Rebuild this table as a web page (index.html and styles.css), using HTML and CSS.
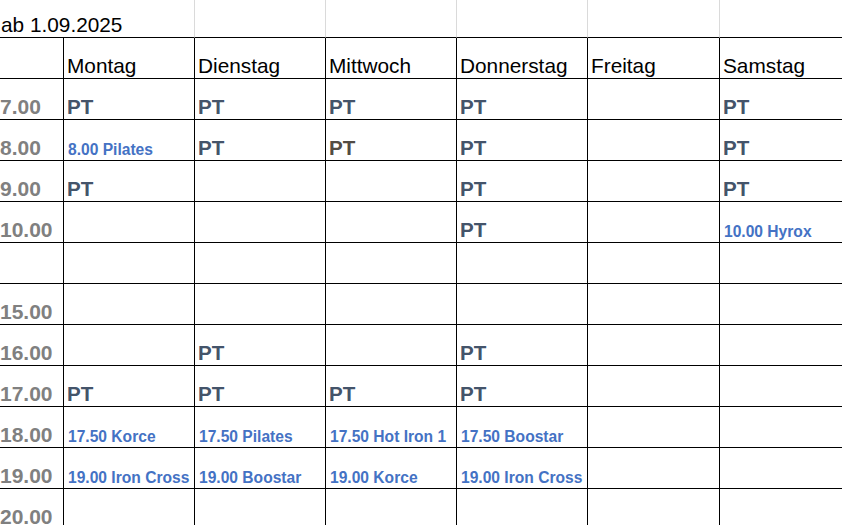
FILE: index.html
```html
<!DOCTYPE html>
<html lang="de">
<head>
<meta charset="utf-8">
<title>Kursplan ab 1.09.2025</title>
<link rel="stylesheet" href="styles.css">
</head>
<body>
<div class="sheet">
  <div class="c top title"><span>ab 1.09.2025</span></div>
  <div class="c top"></div><div class="c top"></div><div class="c top"></div><div class="c top"></div><div class="c top"></div>

  <div class="c t"></div>
  <div class="c h">Montag</div><div class="c h">Dienstag</div><div class="c h">Mittwoch</div><div class="c h">Donnerstag</div><div class="c h">Freitag</div><div class="c h">Samstag</div>

  <div class="c t">7.00</div>
  <div class="c pt">PT</div><div class="c pt">PT</div><div class="c pt">PT</div><div class="c pt">PT</div><div class="c"></div><div class="c pt">PT</div>

  <div class="c t">8.00</div>
  <div class="c k">8.00 Pilates</div><div class="c pt">PT</div><div class="c pt alt">PT</div><div class="c pt">PT</div><div class="c"></div><div class="c pt">PT</div>

  <div class="c t">9.00</div>
  <div class="c pt">PT</div><div class="c"></div><div class="c"></div><div class="c pt">PT</div><div class="c"></div><div class="c pt">PT</div>

  <div class="c t">10.00</div>
  <div class="c"></div><div class="c"></div><div class="c"></div><div class="c pt">PT</div><div class="c"></div><div class="c k">10.00 Hyrox</div>

  <div class="c t"></div>
  <div class="c"></div><div class="c"></div><div class="c"></div><div class="c"></div><div class="c"></div><div class="c"></div>

  <div class="c t">15.00</div>
  <div class="c"></div><div class="c"></div><div class="c"></div><div class="c"></div><div class="c"></div><div class="c"></div>

  <div class="c t">16.00</div>
  <div class="c"></div><div class="c pt">PT</div><div class="c"></div><div class="c pt">PT</div><div class="c"></div><div class="c"></div>

  <div class="c t">17.00</div>
  <div class="c pt">PT</div><div class="c pt">PT</div><div class="c pt">PT</div><div class="c pt">PT</div><div class="c"></div><div class="c"></div>

  <div class="c t">18.00</div>
  <div class="c k">17.50 Korce</div><div class="c k">17.50 Pilates</div><div class="c k">17.50 Hot Iron 1</div><div class="c k">17.50 Boostar</div><div class="c"></div><div class="c"></div>

  <div class="c t">19.00</div>
  <div class="c k">19.00 Iron Cross</div><div class="c k">19.00 Boostar</div><div class="c k">19.00 Korce</div><div class="c k">19.00 Iron Cross</div><div class="c"></div><div class="c"></div>

  <div class="c t">20.00</div>
  <div class="c"></div><div class="c"></div><div class="c"></div><div class="c"></div><div class="c"></div><div class="c"></div>
</div>
</body>
</html>
```

FILE: styles.css
```css
html, body {
  margin: 0;
  padding: 0;
  background: #ffffff;
  overflow: hidden;
}

.sheet {
  display: grid;
  grid-template-columns: 64px 131px 131px 131px 131px 132px 140px;
  grid-template-rows: 38px repeat(12, 41px);
  width: 860px;
  font-family: "Liberation Sans", Arial, sans-serif;
}

.c {
  display: flex;
  align-items: flex-end;
  border-right: 1px solid #000;
  border-bottom: 1px solid #000;
  padding: 0 0 0 3px;
  white-space: nowrap;
  overflow: visible;
  font-size: 20.8px;
  line-height: 24px;
  color: #000;
  min-width: 0;
}

.top {
  border-right-color: #dadada;
}

.title {
  grid-column: span 2;
  padding-left: 1px;
  padding-bottom: 0;
}

.h {
  color: #000;
}

.t {
  padding-left: 0;
  font-size: 21px;
  font-weight: bold;
  color: #808080;
}

.pt {
  font-size: 20.6px;
  font-weight: bold;
  color: #44546a;
}

.pt.alt {
  color: #524c44;
}

.k {
  font-size: 15.6px;
  line-height: 18px;
  font-weight: bold;
  color: #4472c4;
  padding-bottom: 1px;
  padding-left: 4px;
}
```
